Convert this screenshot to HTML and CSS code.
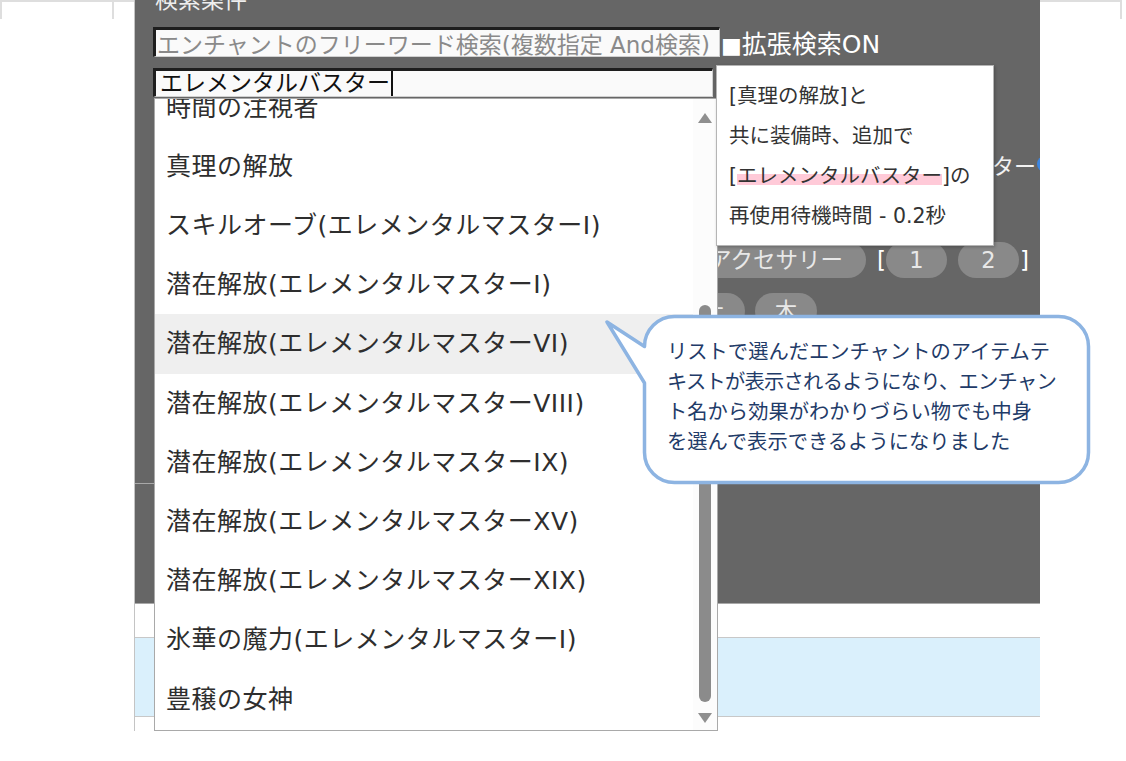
FILE: index.html
```html
<!DOCTYPE html>
<html lang="ja">
<head>
<meta charset="utf-8">
<title>検索条件</title>
<link rel="stylesheet" href="styles.css">
</head>
<body>
<div class="page">
  <div class="layout">
    <div class="side-left"><div class="tab"></div></div>
    <main class="main">
      <section class="panel">
        <h2 class="title">検索条件</h2>
        <div class="row row-free">
          <div class="input input-free"><span class="placeholder">エンチャントのフリーワード検索(複数指定 And検索)</span></div>
          <span class="ext"><span class="box">■</span>拡張検索ON</span>
        </div>
        <div class="row row-name">
          <div class="input input-name"><span class="typed">エレメンタルバスター</span></div>
        </div>
        <div class="row row-class"><span class="class-name">ター</span><span class="radio"></span></div>
        <div class="row pills pills-slot">
          <span class="pill">アクセサリー</span>
          <span class="bracket open">[</span>
          <span class="pill pill-num">1</span>
          <span class="pill pill-num second">2</span>
          <span class="bracket close">]</span>
        </div>
        <div class="row pills pills-day">
          <span class="pill pill-day">土</span>
          <span class="pill pill-day">木</span>
        </div>
        <div class="divider"></div>
      </section>
      <div class="gap"></div>
      <div class="band"></div>
      <div class="foot"></div>
    </main>
    <div class="side-right"><div class="rframe"></div></div>
  </div>

  <div class="dropdown">
    <div class="list">
      <ul class="items">
        <li class="item">時間の注視者</li>
        <li class="item">真理の解放</li>
        <li class="item">スキルオーブ(エレメンタルマスターI)</li>
        <li class="item">潜在解放(エレメンタルマスターI)</li>
        <li class="item hover">潜在解放(エレメンタルマスターVI)</li>
        <li class="item">潜在解放(エレメンタルマスターVIII)</li>
        <li class="item">潜在解放(エレメンタルマスターIX)</li>
        <li class="item">潜在解放(エレメンタルマスターXV)</li>
        <li class="item">潜在解放(エレメンタルマスターXIX)</li>
        <li class="item">氷華の魔力(エレメンタルマスターI)</li>
        <li class="item">豊穣の女神</li>
      </ul>
    </div>
    <div class="sb">
      <span class="arrow-up"></span>
      <span class="thumb" style="margin-top:182px;height:397px"></span>
      <span class="arrow-down"></span>
    </div>
  </div>

  <div class="tooltip">
    <div class="tline">[真理の解放]と</div>
    <div class="tline">共に装備時、追加で</div>
    <div class="tline">[<span class="mark">エレメンタルバスター</span>]の</div>
    <div class="tline">再使用待機時間 - 0.2秒</div>
  </div>

  <div class="callout">
    <svg class="bubble" width="495" height="180" viewBox="0 0 495 180" xmlns="http://www.w3.org/2000/svg">
      <path d="M74.5 6.5 H458.5 A30 30 0 0 1 488.5 36.5 V142.5 A30 30 0 0 1 458.5 172.5 H74.5 A30 30 0 0 1 44.5 142.5 V73 L7 12 L44.5 36.5 A30 30 0 0 1 74.5 6.5 Z" fill="#ffffff" stroke="#8db4e2" stroke-width="3.5" stroke-linejoin="round"/>
    </svg>
    <p class="callout-text"><span class="cline">リストで選んだエンチャントのアイテムテ</span><span class="cline tight">キストが表示されるようになり、エンチャン</span><span class="cline">ト名から効果がわかりづらい物でも中身</span><span class="cline">を選んで表示できるようになりました</span></p>
  </div>
</div>
</body>
</html>
```

FILE: styles.css
```css
* { box-sizing: border-box; }
html, body { margin: 0; padding: 0; background: #fff; }
body { font-family: "DejaVu Sans", "Noto Sans CJK JP", sans-serif; }

.page { position: relative; width: 1126px; height: 761px; overflow: hidden; background: #fff; }

.layout { display: grid; grid-template-columns: 134px 906px 86px; align-items: start; }

.side-left { height: 19px; border-top: 2px solid #dedede; }
.tab { width: 114px; height: 17px; border-left: 2px solid #dedede; border-right: 2px solid #dedede; }
.rframe { width: 82px; height: 19px; border-top: 2px solid #dedede; border-right: 2px solid #dedede; }

.main { height: 731px; border-left: 1px solid #c4c4c4; display: flex; flex-direction: column; }

.panel { height: 604px; flex: none; background: #666666; border-bottom: 1px solid #a8a8a8; overflow: hidden; padding-left: 18px; color: #eeeeee; }

.title { margin: -11px 0 0 2px; font-size: 23px; line-height: 23px; height: 23px; font-weight: normal; color: #eeeeee; white-space: nowrap; }

.row { display: flex; align-items: center; white-space: nowrap; }
.row-free { margin-top: 15px; height: 30px; }
.input { display: flex; align-items: center; background: #fafafa; border-style: solid; border-color: #1e1e1e #d0d0d0 #d0d0d0 #1e1e1e; flex: none; overflow: hidden; }
.input-free { width: 567px; height: 30px; border-width: 3px 1px 1px 3px; padding-left: 1px; }
.placeholder { font-size: 23px; color: #8a8a8a; white-space: nowrap; }
.ext { margin-left: 1px; font-size: 25px; color: #ffffff; }
.box { font-size: 22px; }

.row-name { margin-top: 11px; height: 29px; }
.input-name { width: 560px; height: 29px; border-width: 3px 1px 1px 3px; padding-left: 4px; }
.typed { font-size: 23px; line-height: 25px; color: #111111; padding-right: 1px; border-right: 2px solid #111111; }

.row-class { margin-top: 52px; height: 30px; margin-left: 839px; font-size: 22px; color: #f2f2f2; }
.class-name { flex: none; }
.radio { flex: none; width: 16px; height: 16px; margin-left: 1px; border-radius: 50%; background: #3d86e0; }

.pills-slot { margin-top: 63px; height: 36px; margin-left: 533px; }
.pills-day { margin-top: 15px; height: 36px; margin-left: 530px; gap: 10px; }
.pill { flex: none; height: 36px; padding: 0 23px; border-radius: 18px; background: #898989; color: #e8e8e8; font-size: 22.5px; line-height: 1; display: inline-flex; align-items: center; justify-content: center; }
.pill-num { width: 61px; padding: 0; }
.pill-num.second { margin-left: 11px; }
.pill-day { width: 62px; padding: 0; }
.bracket { flex: none; font-size: 23px; color: #ffffff; }
.bracket.open { margin-left: 11px; }
.bracket.close { margin-left: 1px; }

.divider { margin: 154px 0 0 -18px; border-top: 1px solid #a8a8a8; }

.gap { height: 33px; flex: none; }
.band { height: 80px; flex: none; background: #daf0fc; border-top: 1px solid #c8c8c8; border-bottom: 1px solid #c8c8c8; }
.foot { flex: 1; }

/* dropdown list */
.dropdown { position: absolute; left: 154px; top: 98px; width: 564px; height: 633px; border: 1px solid #a9a9a9; background: #ffffff; display: flex; overflow: hidden; }
.list { flex: 1; overflow: hidden; }
.items { list-style: none; margin: -21.4px 0 0; padding: 0; }
.item { height: 59.2px; display: flex; align-items: center; padding: 0 0 5px 11px; font-size: 25px; letter-spacing: 0.5px; color: #2e2e2e; white-space: nowrap; }
.item.hover { background: #efefef; }
.sb { width: 24px; flex: none; display: flex; flex-direction: column; align-items: center; padding-top: 14px; background: #fcfcfc; }
.arrow-up { display: block; width: 0; height: 0; border-left: 7px solid transparent; border-right: 7px solid transparent; border-bottom: 10px solid #8f8f8f; }
.thumb { display: block; width: 12px; border-radius: 6px; background: #8b8b8b; }
.arrow-down { display: block; width: 0; height: 0; margin-top: 11px; border-left: 7px solid transparent; border-right: 7px solid transparent; border-top: 10px solid #8f8f8f; }

/* tooltip */
.tooltip { position: absolute; left: 716px; top: 65px; width: 278px; height: 181px; background: #ffffff; border: 1px solid #b5b5b5; box-shadow: 1px 1px 3px rgba(0, 0, 0, 0.25); padding: 10px 0 0 12px; font-size: 20.5px; line-height: 40px; color: #333333; white-space: nowrap; }
.mark { background: linear-gradient(to bottom, transparent 40%, #ffcad8 40%, #ffcad8 88%, transparent 88%); }

/* callout */
.callout { position: absolute; left: 600px; top: 310px; width: 495px; height: 180px; }
.bubble { position: absolute; left: 0; top: 0; }
.callout-text { position: relative; margin: 0; padding: 25px 0 0 67px; font-family: "Noto Sans CJK JP", sans-serif; font-size: 20.3px; line-height: 30px; color: #1f3b68; white-space: nowrap; }
.cline { display: block; }
.tight { letter-spacing: -0.75px; }
```
